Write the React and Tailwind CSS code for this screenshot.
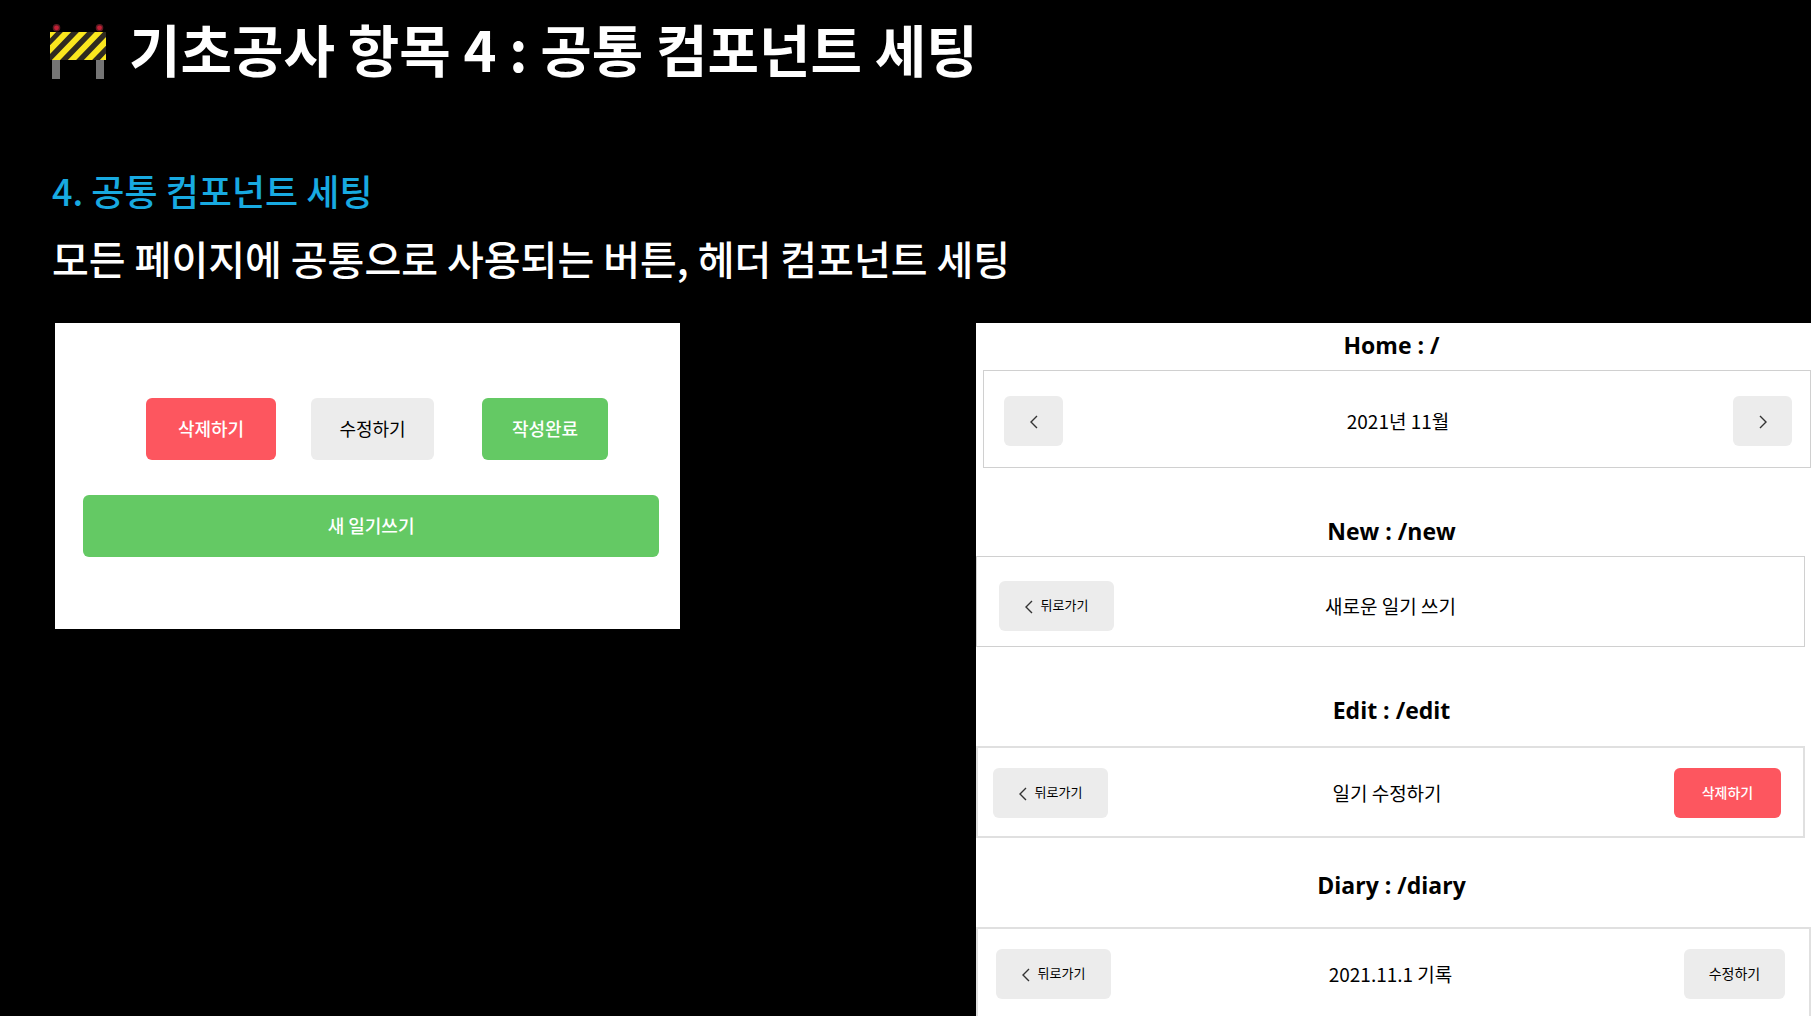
import React from 'react';

const BUTTON_COLORS = {
  positive: 'bg-[#64c964] text-white font-medium',
  negative: 'bg-[#fd565f] text-white font-medium',
  default: 'bg-[#ececec] text-black',
};

const Button = ({ type = 'default', className = '', children, ...props }) => (
  <button
    type="button"
    className={`flex items-center justify-center rounded-md pb-0.5 whitespace-nowrap ${BUTTON_COLORS[type]} ${className}`}
    {...props}
  >
    {children}
  </button>
);

const Chevron = ({ right }) => (
  <svg className="mt-1" width="8" height="14" viewBox="0 0 8 14" fill="none" stroke="#333" strokeWidth="1.4">
    <path d={right ? 'M1 1 L7 7 L1 13' : 'M7 1 L1 7 L7 13'} />
  </svg>
);

const BackButton = () => (
  <Button className="h-[50px] w-[115px] gap-2 text-[13px]">
    <Chevron /> 뒤로가기
  </Button>
);

// Title + bordered header preview of one page
const HeaderPreview = ({ title, text, left, right, className = '', boxClass = '' }) => (
  <section className={`flex flex-col ${className}`}>
    <h3 className="text-center text-[23px] leading-[30px] font-bold font-['Open_Sans','Noto_Sans',sans-serif] pr-1">{title}</h3>
    <div className={`grid grid-cols-[1fr_auto_1fr] ${boxClass}`}>
      <div className="flex">{left}</div>
      <div className="flex h-[50px] items-center text-[19px]">{text}</div>
      <div className="flex justify-end">{right}</div>
    </div>
  </section>
);

const BarrierIcon = () => (
  <svg className="mt-2 shrink-0" width="56" height="56" viewBox="0 0 56 56">
    <defs>
      <clipPath id="board">
        <rect x="0" y="8" width="56" height="28" />
      </clipPath>
    </defs>
    <circle cx="6.5" cy="3.8" r="3.8" fill="#5b1a22" />
    <circle cx="6.5" cy="3.8" r="2.4" fill="#c32036" />
    <circle cx="49.5" cy="3.8" r="3.8" fill="#5b1a22" />
    <circle cx="49.5" cy="3.8" r="2.4" fill="#c32036" />
    <rect x="2" y="34" width="8" height="21" fill="#757575" />
    <rect x="46" y="34" width="8" height="21" fill="#757575" />
    <rect x="0" y="8" width="56" height="28" fill="#2f2a20" />
    <g clipPath="url(#board)" stroke="#fae61e" strokeWidth="6">
      <path d="M-27 38 L4 6 M-12 38 L19 6 M4 38 L35 6 M20 38 L51 6 M36 38 L67 6 M52 38 L83 6" />
    </g>
  </svg>
);

const App = () => {
  return (
    <div className="flex min-h-screen flex-col bg-black text-white font-['Noto_Sans_CJK_KR',sans-serif]">
      <header className="px-[50px] pt-1.5">
        <h1 className="flex items-center gap-[23px] text-[56px] leading-[84px] font-bold">
          <BarrierIcon />
          기초공사 항목 4 : 공통 컴포넌트 세팅
        </h1>
        <div className="pl-0.5">
          <h2 className="mt-[72px] text-4xl leading-[56px] font-medium text-[#18aae1]">4. 공통 컴포넌트 세팅</h2>
          <p className="mt-2 text-[40px] leading-[64px] font-medium">모든 페이지에 공통으로 사용되는 버튼, 헤더 컴포넌트 세팅</p>
        </div>
      </header>

      <main className="mt-[33px] flex flex-1 items-start justify-between pl-[55px] text-black">
        {/* Button */}
        <section className="w-[35.6%] bg-white pt-[75px] pb-[72px] pl-7 pr-[21px] text-lg">
          <div className="flex pl-[63px]">
            <Button type="negative" className="h-[62px] w-[130px]">삭제하기</Button>
            <Button className="ml-[35px] h-[62px] w-[123px]">수정하기</Button>
            <Button type="positive" className="ml-12 h-[62px] w-[126px]">작성완료</Button>
          </div>
          <Button type="positive" className="mt-[35px] h-[62px] w-full">새 일기쓰기</Button>
        </section>

        {/* Header */}
        <div className="flex w-[47.55%] flex-col self-stretch bg-white pt-[7px]">
          <HeaderPreview
            title="Home : /"
            text="2021년 11월"
            boxClass="ml-[7px] mt-2.5 border border-[#d0d0d0] pt-[25px] pb-[21px] pl-5 pr-[18px]"
            left={<Button aria-label="이전 달" className="h-[50px] w-[59px]"><Chevron /></Button>}
            right={<Button aria-label="다음 달" className="h-[50px] w-[59px]"><Chevron right /></Button>}
          />
          <HeaderPreview
            title="New : /new"
            text="새로운 일기 쓰기"
            className="mt-12"
            boxClass="mt-2.5 mr-1.5 border border-[#d0d0d0] pt-6 pb-[15px] px-[22px]"
            left={<BackButton />}
          />
          <HeaderPreview
            title="Edit : /edit"
            text="일기 수정하기"
            className="mt-12"
            boxClass="mt-[21px] mr-1.5 border-2 border-[#e0e0e0] pt-5 pb-[18px] pl-[15px] pr-[22px]"
            left={<BackButton />}
            right={<Button type="negative" className="h-[50px] w-[107px] text-sm">삭제하기</Button>}
          />
          <HeaderPreview
            title="Diary : /diary"
            text="2021.11.1 기록"
            className="mt-8 flex-1"
            boxClass="mt-[27px] flex-1 border-2 border-b-0 border-[#e0e0e0] pt-5 pl-[18px] pr-6"
            left={<BackButton />}
            right={<Button className="h-[50px] w-[101px] text-sm">수정하기</Button>}
          />
        </div>
      </main>
    </div>
  );
};

export default App;
